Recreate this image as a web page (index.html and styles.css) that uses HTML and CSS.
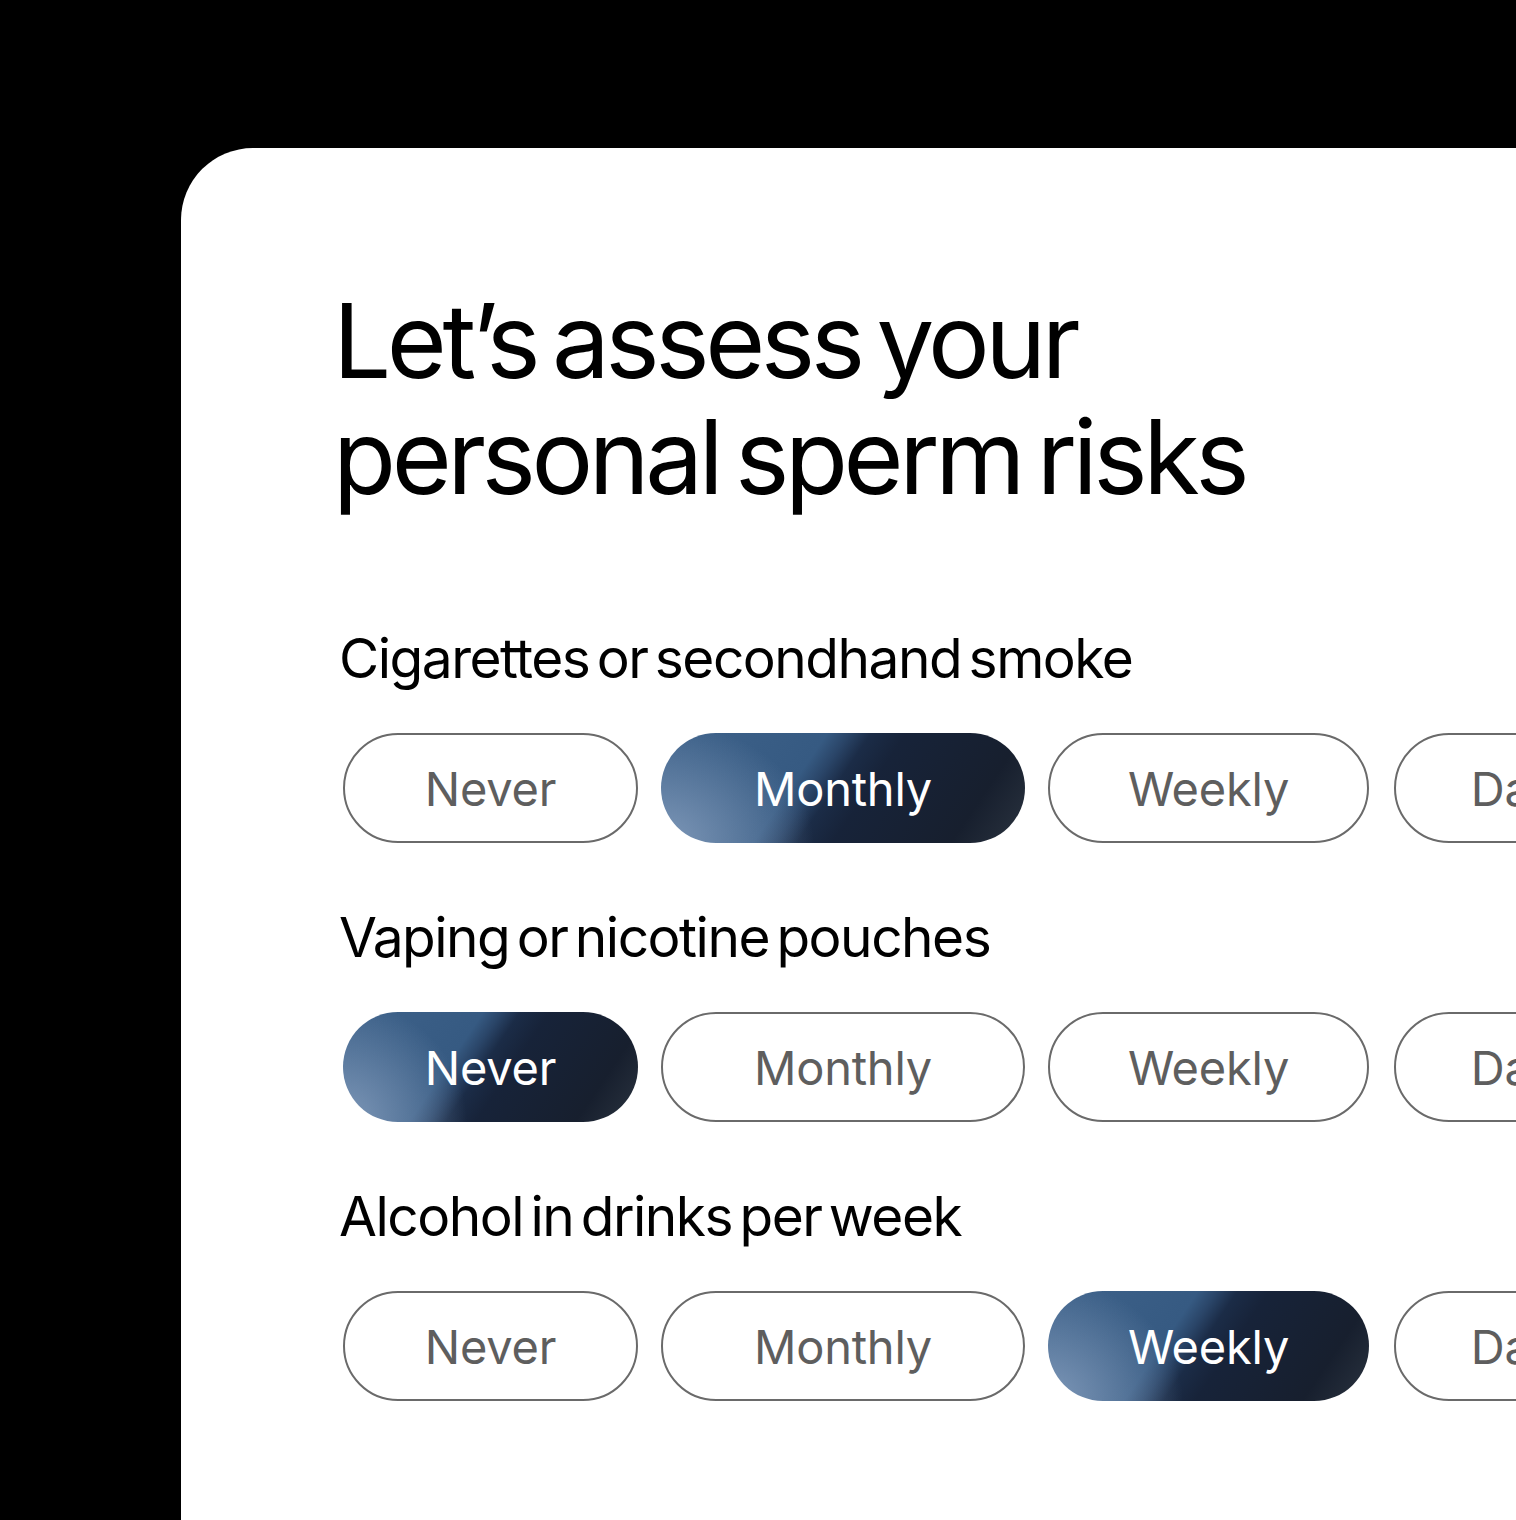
FILE: index.html
```html
<!DOCTYPE html>
<html lang="en">
<head>
  <meta charset="UTF-8">
  <meta name="viewport" content="width=device-width, initial-scale=1.0">
  <title>Risk assessment</title>
  <link rel="stylesheet" href="styles.css">
</head>
<body>
  <main class="card">
    <h1 class="title">Let’s assess your<br>personal sperm risks</h1>

    <section class="question">
      <h2 class="question-label">Cigarettes or secondhand smoke</h2>
      <div class="options">
        <button type="button" class="pill pill-never">Never</button>
        <button type="button" class="pill pill-monthly selected">Monthly</button>
        <button type="button" class="pill pill-weekly">Weekly</button>
        <button type="button" class="pill pill-daily">Daily</button>
      </div>
    </section>

    <section class="question">
      <h2 class="question-label">Vaping or nicotine pouches</h2>
      <div class="options">
        <button type="button" class="pill pill-never selected">Never</button>
        <button type="button" class="pill pill-monthly">Monthly</button>
        <button type="button" class="pill pill-weekly">Weekly</button>
        <button type="button" class="pill pill-daily">Daily</button>
      </div>
    </section>

    <section class="question">
      <h2 class="question-label">Alcohol in drinks per week</h2>
      <div class="options">
        <button type="button" class="pill pill-never">Never</button>
        <button type="button" class="pill pill-monthly">Monthly</button>
        <button type="button" class="pill pill-weekly selected">Weekly</button>
        <button type="button" class="pill pill-daily">Daily</button>
      </div>
    </section>
  </main>
</body>
</html>
```

FILE: styles.css
```css
html, body {
  margin: 0;
  height: 100%;
}
body {
  background-color: #000;
  font-family: Inter, "Liberation Sans", sans-serif;
  color: #000;
  overflow: hidden;
}
.card {
  margin: 148px 0 0 181px;
  min-height: 1400px;
  background-color: #fff;
  border-top-left-radius: 72px;
  padding: 135px 0 0 162px;
  box-sizing: border-box;
}
.title {
  margin: 0 0 0 -10px;
  font-size: 103px;
  line-height: 116px;
  font-weight: 400;
  letter-spacing: -0.043em;
  word-spacing: -0.085em;
  white-space: nowrap;
}
.question {
  margin-top: 108px;
}
.question + .question {
  margin-top: 59px;
}
.question-label {
  margin: 0 0 40px -4px;
  font-size: 55px;
  line-height: 70px;
  font-weight: 400;
  letter-spacing: -0.027em;
  word-spacing: -0.12em;
  white-space: nowrap;
}
.options {
  display: flex;
  gap: 23px;
}
.pill {
  flex: none;
  height: 110px;
  border: 2px solid #6a6a6a;
  border-radius: 55px;
  background-color: #fff;
  color: #5e5e5e;
  font-family: Inter, "Liberation Sans", sans-serif;
  font-size: 47px;
  font-weight: 400;
  letter-spacing: -0.005em;
  padding: 0;
  cursor: pointer;
}
.pill-never { width: 295px; }
.pill-monthly { width: 364px; }
.pill-weekly { width: 321px; }
.pill-daily { width: 262px; margin-left: 2px; }
.pill.selected {
  border-color: transparent;
  color: #fff;
  background:
    radial-gradient(ellipse 42% 110% at 0% 100%, rgba(130, 155, 187, 0.95), rgba(130, 155, 187, 0) 100%),
    linear-gradient(124deg, #3e628a 0%, #365a82 38%, #2a4568 43%, #1b2c47 48%, #172339 56%, #171f2e 83%, #2a333f 100%);
  background-origin: border-box;
}
```
